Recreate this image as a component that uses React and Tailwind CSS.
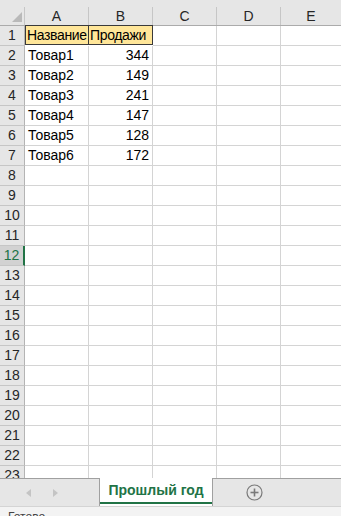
import React from 'react';

const cols = ['A', 'B', 'C', 'D', 'E'];
const colWidths = ['w-[64px]', 'w-[64px]', 'w-[64px]', 'w-[64px]', 'w-[60px]'];

const data = [
  ['Товар1', 344],
  ['Товар2', 149],
  ['Товар3', 241],
  ['Товар4', 147],
  ['Товар5', 128],
  ['Товар6', 172],
];

const rowCount = 23;

function ColumnHeader() {
  return (
    <div className="flex h-[26px] bg-[#e6e6e6] border-b border-[#ababab] shrink-0">
      {/* corner */}
      <div className="w-[25px] h-full pt-[7px] shrink-0">
        <div className="h-full border-r border-[#c6c6c6] flex items-end justify-end pr-[2px] pb-[3px]">
          <svg width="10" height="10" viewBox="0 0 10 10">
            <polygon points="10,0 10,10 0,10" fill="#b9b9b9" />
          </svg>
        </div>
      </div>
      {cols.map((c, i) => (
        <div key={c} className={`${colWidths[i]} h-full pt-[7px] shrink-0`}>
          <div
            className={`h-full flex items-center justify-center text-[14px] text-[#262626] ${
              i < cols.length - 1 ? 'border-r border-[#c6c6c6]' : ''
            }`}
          >
            {c}
          </div>
        </div>
      ))}
    </div>
  );
}

function Row({ n }) {
  const selected = n === 12;
  const item = n >= 2 && n <= 7 ? data[n - 2] : null;
  const isHead = n === 1;

  return (
    <div className="flex h-[20px] shrink-0">
      <div
        className={`w-[25px] h-full shrink-0 flex items-center justify-center text-[14px] border-b ${
          selected
            ? 'bg-[#d2d2d2] text-[#217346] border-r-2 border-r-[#217346] border-b-[#c6c6c6]'
            : 'bg-[#e6e6e6] text-[#262626] border-r border-r-[#b4b4b4] border-b-[#c6c6c6]'
        }`}
      >
        {n}
      </div>
      {cols.map((c, i) => {
        if (isHead && i < 2) {
          return (
            <div
              key={c}
              className={`${colWidths[i]} h-full shrink-0 bg-[#ffe699] border border-[#3a3a3a] ${
                i === 1 ? '-ml-px w-[65px]' : ''
              } -mt-px h-[21px] flex items-center pl-[1px] text-[14px] tracking-[-0.35px] text-black whitespace-nowrap overflow-hidden`}
            >
              {i === 0 ? 'Название' : 'Продажи'}
            </div>
          );
        }
        let content = null;
        if (item && i === 0) content = item[0];
        if (item && i === 1) content = item[1];
        return (
          <div
            key={c}
            className={`${colWidths[i]} h-full shrink-0 border-b border-[#d4d4d4] ${
              i < cols.length - 1 ? 'border-r' : ''
            } border-r-[#d4d4d4] flex items-center px-[3px] text-[14px] text-black ${
              i === 1 ? 'justify-end' : ''
            }`}
          >
            {content}
          </div>
        );
      })}
    </div>
  );
}

function TabBar() {
  return (
    <div className="flex h-[28px] bg-[#e6e6e6] shrink-0">
      <div className="w-[100px] h-full border-t border-[#a0a0a0] border-r flex items-center pl-[26px] gap-[20px]">
        <svg width="6" height="8" viewBox="0 0 6 8">
          <polygon points="5,0 5,8 0,4" fill="#c4c4c4" />
        </svg>
        <svg width="6" height="8" viewBox="0 0 6 8">
          <polygon points="1,0 1,8 6,4" fill="#c4c4c4" />
        </svg>
      </div>
      <div className="w-[112px] h-full bg-white flex flex-col">
        <div className="flex-1 flex items-center justify-center text-[14px] font-bold text-[#217346]">
          Прошлый год
        </div>
        <div className="h-[2px] bg-[#217346] mb-[2px]" />
      </div>
      <div className="flex-1 h-full border-t border-l border-[#a0a0a0] flex items-center pl-[33px]">
        <svg width="17" height="17" viewBox="0 0 17 17">
          <circle cx="8.5" cy="8.5" r="7.5" fill="none" stroke="#7a7a7a" strokeWidth="1.2" />
          <line x1="8.5" y1="4.5" x2="8.5" y2="12.5" stroke="#7a7a7a" strokeWidth="1.6" />
          <line x1="4.5" y1="8.5" x2="12.5" y2="8.5" stroke="#7a7a7a" strokeWidth="1.6" />
        </svg>
      </div>
    </div>
  );
}

export default function App() {
  return (
    <div
      className="w-[341px] h-[516px] overflow-hidden flex flex-col bg-white"
      style={{ fontFamily: '"Liberation Sans", Arial, sans-serif' }}
    >
      <div className="h-[478px] overflow-hidden flex flex-col shrink-0">
        <ColumnHeader />
        {Array.from({ length: rowCount }, (_, k) => (
          <Row key={k + 1} n={k + 1} />
        ))}
      </div>
      <TabBar />
      <div className="flex-1 bg-[#f3f3f3] border-t border-[#d4d4d4] pl-[8px] pt-[4px] text-[12px] text-[#444] leading-none">
        Готово
      </div>
    </div>
  );
}
